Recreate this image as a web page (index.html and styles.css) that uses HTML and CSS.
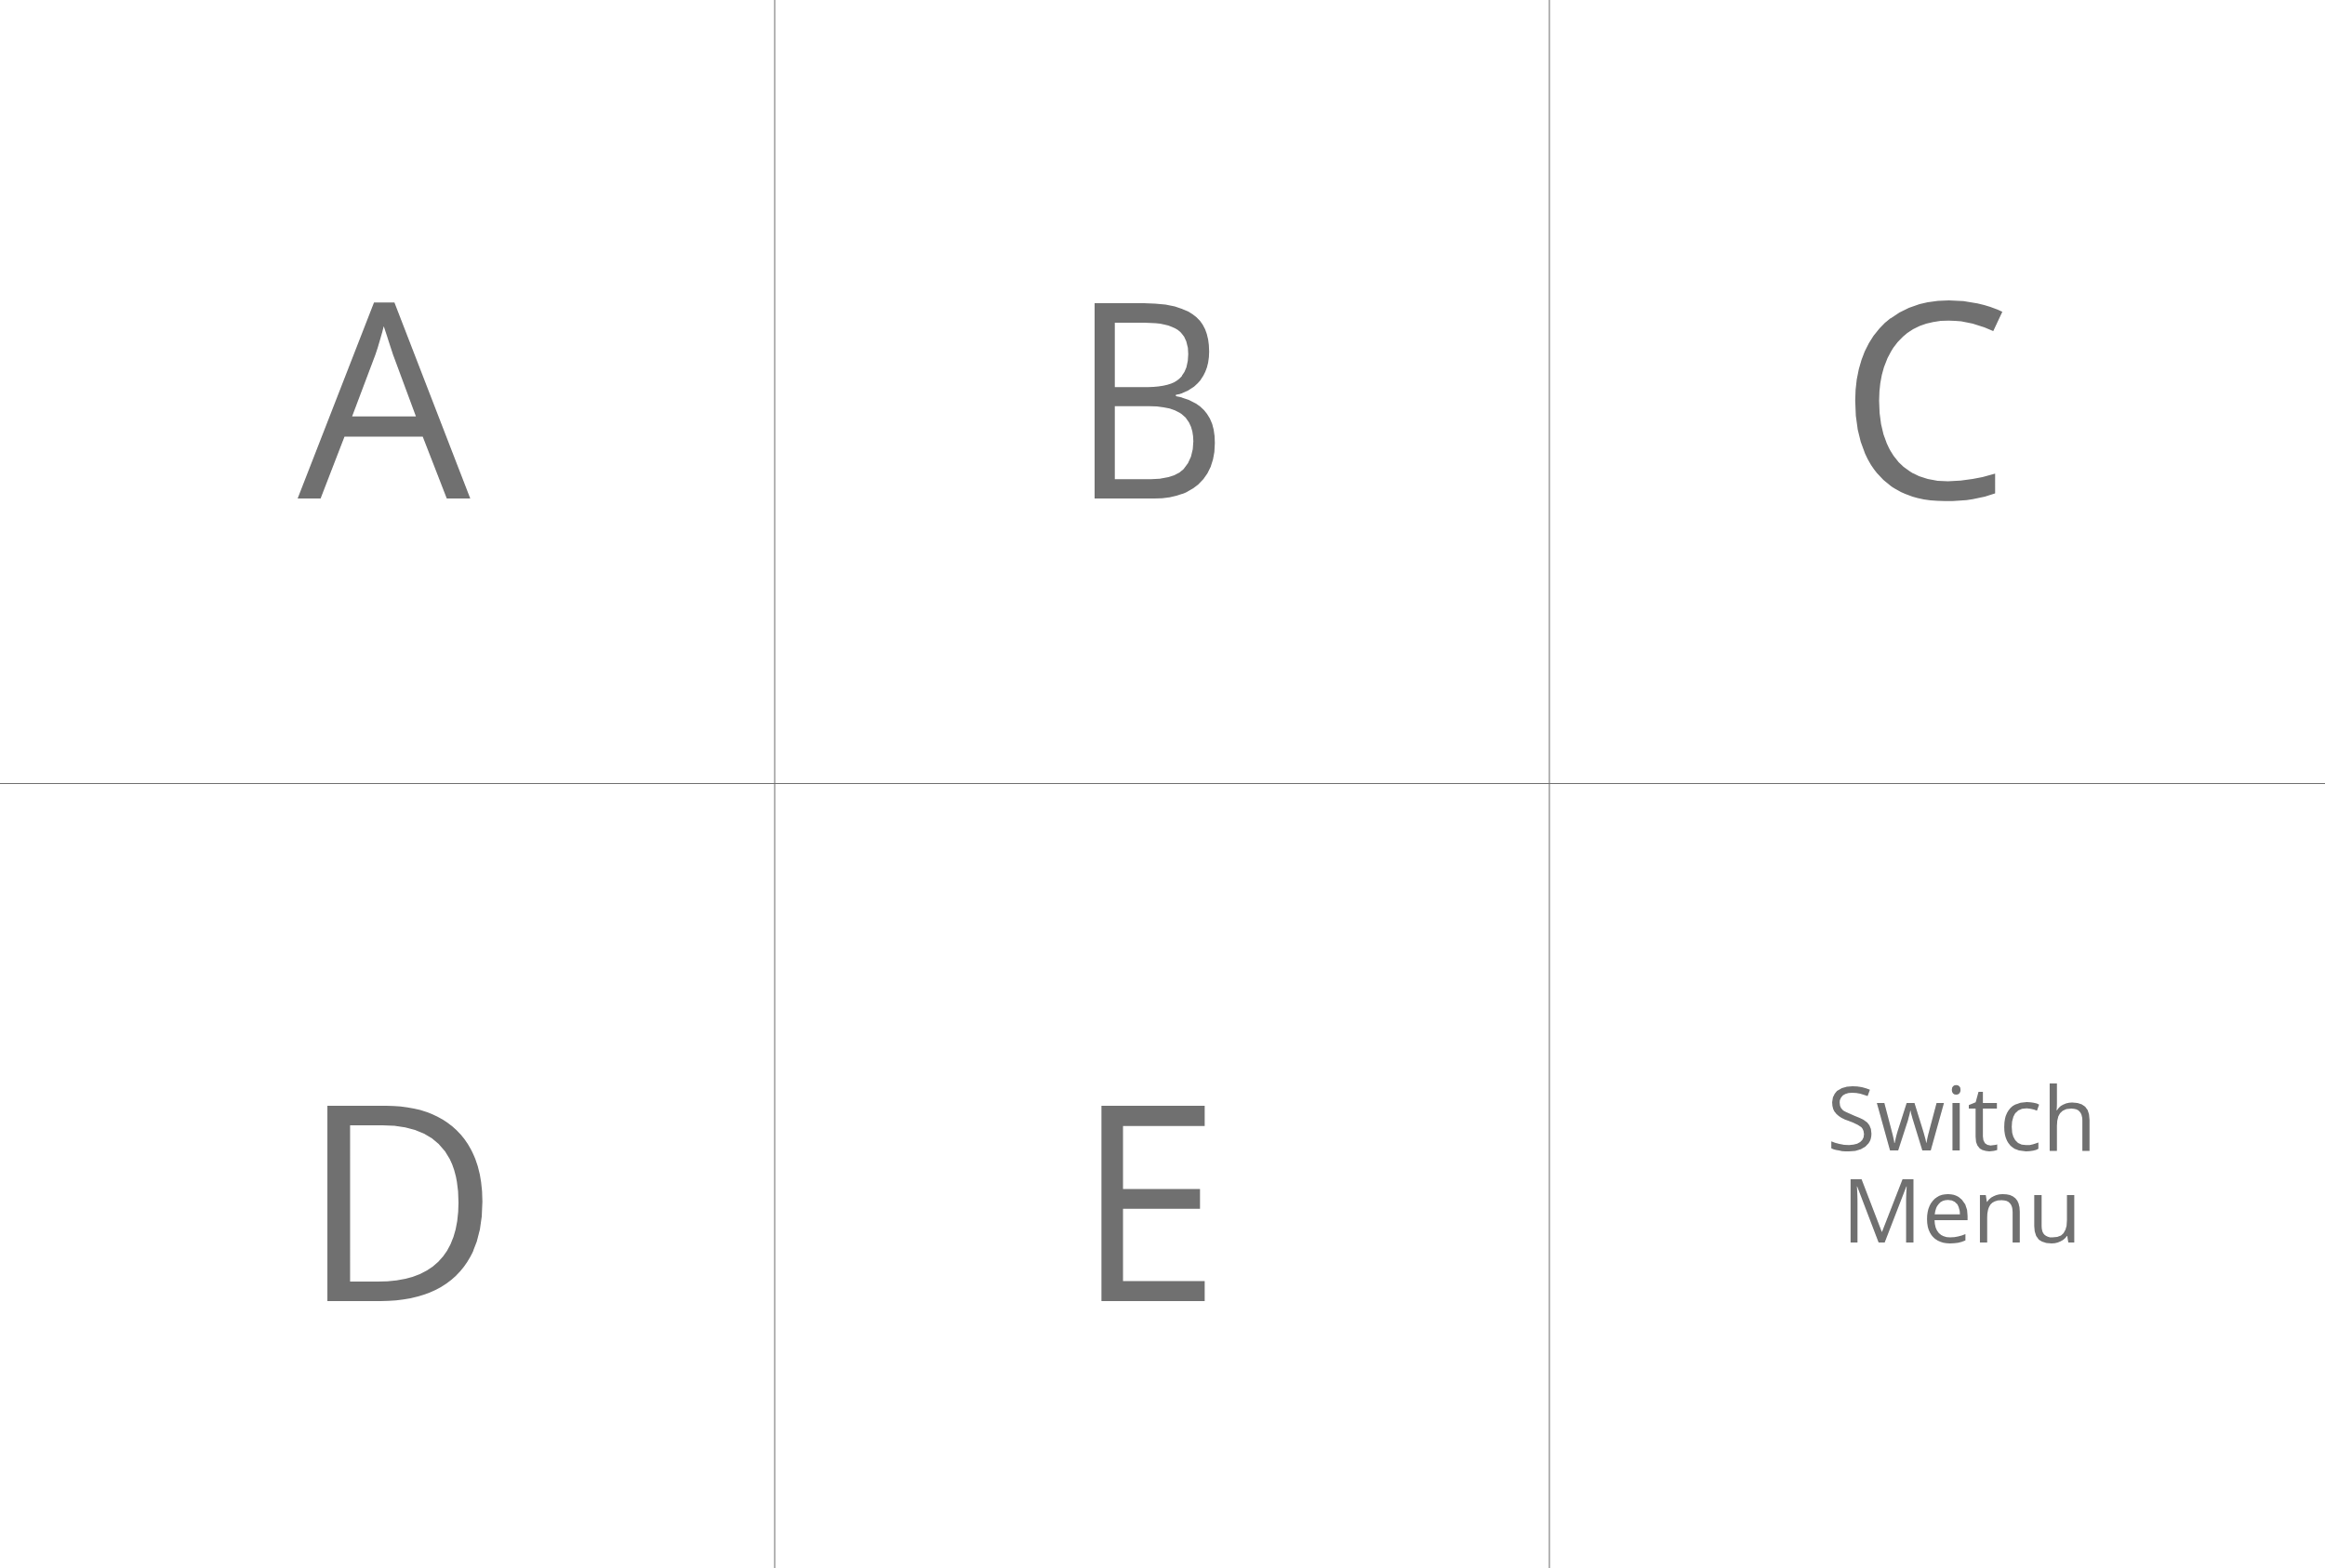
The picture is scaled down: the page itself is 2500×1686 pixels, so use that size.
FILE: index.html
```html
<!DOCTYPE html>
<html lang="en">
<head>
<meta charset="utf-8">
<title>Grid Menu</title>
<link rel="stylesheet" href="styles.css">
</head>
<body>
<main class="board">
  <div class="cell row-top cell-a"><span class="letter">A</span></div>
  <div class="vline"></div>
  <div class="cell row-top cell-b"><span class="letter">B</span></div>
  <div class="vline"></div>
  <div class="cell row-top cell-c"><span class="letter">C</span></div>
  <div class="hline"></div>
  <div class="cell row-bottom cell-d"><span class="letter">D</span></div>
  <div class="vline"></div>
  <div class="cell row-bottom cell-e"><span class="letter">E</span></div>
  <div class="vline"></div>
  <div class="cell row-bottom switch-cell"><span class="switch">Switch<br>Menu</span></div>
</main>
</body>
</html>
```
FILE: styles.css
```css
html, body {
  margin: 0;
  padding: 0;
  background: #ffffff;
}

.board {
  width: 2500px;
  height: 1686px;
  display: grid;
  grid-template-columns: 832px 2px 831px 2px 833px;
  grid-template-rows: 842px 1px 843px;
  font-family: "Open Sans", "Noto Sans", sans-serif;
  color: #707070;
}

.vline {
  background: #b4b4b4;
}

.hline {
  grid-column: 1 / -1;
  background: #6f6f6f;
}

.cell {
  display: flex;
  align-items: center;
  justify-content: center;
  overflow: hidden;
}

.letter {
  font-size: 294px;
  line-height: 400px;
  font-weight: 400;
}

.row-top {
  padding-top: 2px;
}

.row-bottom {
  padding-top: 40px;
}

.cell-a {
  padding-right: 6px;
}

.cell-b {
  padding-right: 28px;
}

.cell-b .letter {
  display: inline-block;
  transform: scaleX(0.89);
}

.cell-c {
  padding-right: 28px;
}

.cell-d {
  padding-left: 28px;
}

.cell-e {
  padding-right: 30px;
}

.cell-e .letter {
  display: inline-block;
  transform: scaleX(0.95);
}

.switch-cell {
  padding-top: 0;
  padding-bottom: 32px;
  padding-left: 52px;
}

.switch {
  font-size: 96px;
  line-height: 99px;
  text-align: center;
}
```
